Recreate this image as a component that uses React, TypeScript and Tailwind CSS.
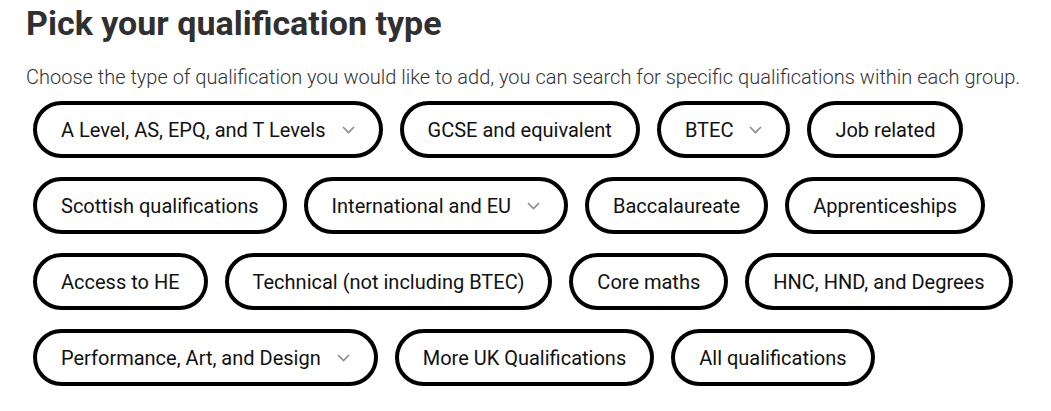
const groups: { label: string; menu?: boolean }[][] = [
  [
    { label: "A Level, AS, EPQ, and T Levels", menu: true },
    { label: "GCSE and equivalent" },
    { label: "BTEC", menu: true },
    { label: "Job related" },
  ],
  [
    { label: "Scottish qualifications" },
    { label: "International and EU", menu: true },
    { label: "Baccalaureate" },
    { label: "Apprenticeships" },
  ],
  [
    { label: "Access to HE" },
    { label: "Technical (not including BTEC)" },
    { label: "Core maths" },
    { label: "HNC, HND, and Degrees" },
  ],
  [
    { label: "Performance, Art, and Design", menu: true },
    { label: "More UK Qualifications" },
    { label: "All qualifications" },
  ],
]

function Chevron() {
  return (
    <svg width="13" height="8" viewBox="0 0 13 8" fill="none" className="ml-4 shrink-0">
      <path d="M1 1l5.5 5.5L12 1" stroke="#8a8a8a" strokeWidth="1.6" />
    </svg>
  )
}

function Pill({ label, menu }: { label: string; menu?: boolean }) {
  return (
    <button className="flex h-[57px] items-center rounded-full border-[4px] border-black bg-white px-6 text-[20px] text-[#111] cursor-pointer">
      <span>{label}</span>
      {menu && <Chevron />}
    </button>
  )
}

export default function App() {
  return (
    <div className="min-h-screen bg-white px-[26px] pt-[3px] font-['Roboto',sans-serif]">
      <h1 className="text-[34px] font-bold leading-[40px] text-[#303030]">Pick your qualification type</h1>
      <p className="mt-[20px] text-[20px] font-light leading-[28px] text-[#333]">
        Choose the type of qualification you would like to add, you can search for specific qualifications within each group.
      </p>
      <div className="ml-[7px] mt-[10px] flex flex-col gap-y-[19px]">
        {groups.map((row, i) => (
          <div key={i} className="flex gap-x-[17px]">
            {row.map((g) => (
              <Pill key={g.label} {...g} />
            ))}
          </div>
        ))}
      </div>
    </div>
  )
}
